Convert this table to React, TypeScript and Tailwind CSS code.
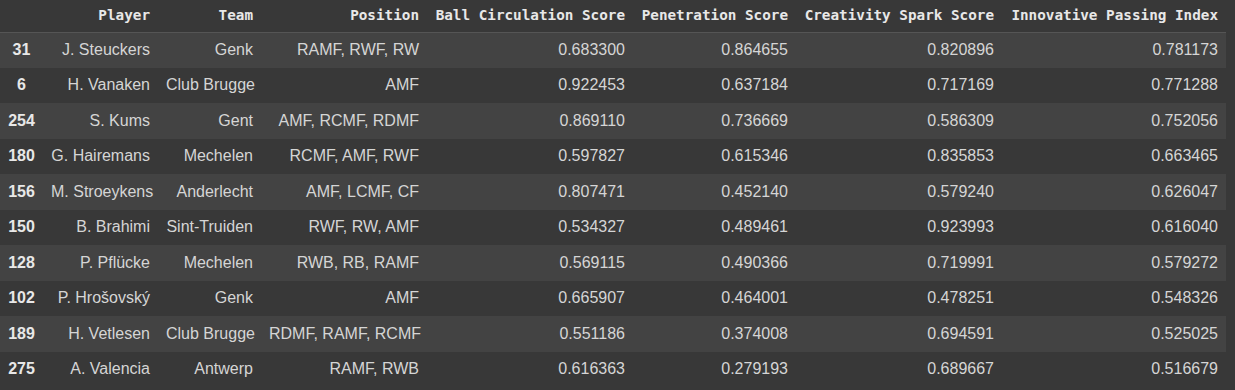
import React from 'react';

const columns = [
  { key: 'player', label: 'Player', width: 'w-[115px]' },
  { key: 'team', label: 'Team', width: 'w-[103px]' },
  { key: 'position', label: 'Position', width: 'w-[166px]' },
  { key: 'ball', label: 'Ball Circulation Score', width: 'w-[206px]' },
  { key: 'pen', label: 'Penetration Score', width: 'w-[163px]' },
  { key: 'spark', label: 'Creativity Spark Score', width: 'w-[206px]' },
  { key: 'ipi', label: 'Innovative Passing Index', width: 'w-[224px]' },
];

const rows = [
  ['31', 'J. Steuckers', 'Genk', 'RAMF, RWF, RW', '0.683300', '0.864655', '0.820896', '0.781173'],
  ['6', 'H. Vanaken', 'Club Brugge', 'AMF', '0.922453', '0.637184', '0.717169', '0.771288'],
  ['254', 'S. Kums', 'Gent', 'AMF, RCMF, RDMF', '0.869110', '0.736669', '0.586309', '0.752056'],
  ['180', 'G. Hairemans', 'Mechelen', 'RCMF, AMF, RWF', '0.597827', '0.615346', '0.835853', '0.663465'],
  ['156', 'M. Stroeykens', 'Anderlecht', 'AMF, LCMF, CF', '0.807471', '0.452140', '0.579240', '0.626047'],
  ['150', 'B. Brahimi', 'Sint-Truiden', 'RWF, RW, AMF', '0.534327', '0.489461', '0.923993', '0.616040'],
  ['128', 'P. Pflücke', 'Mechelen', 'RWB, RB, RAMF', '0.569115', '0.490366', '0.719991', '0.579272'],
  ['102', 'P. Hrošovský', 'Genk', 'AMF', '0.665907', '0.464001', '0.478251', '0.548326'],
  ['189', 'H. Vetlesen', 'Club Brugge', 'RDMF, RAMF, RCMF', '0.551186', '0.374008', '0.694591', '0.525025'],
  ['275', 'A. Valencia', 'Antwerp', 'RAMF, RWB', '0.616363', '0.279193', '0.689667', '0.516679'],
];

export default function App() {
  return (
    <div className="w-[1235px] h-[390px] bg-[#383838] overflow-hidden">
      {/* dataframe output */}
      <table className="table-fixed w-[1226px] border-collapse text-[16px] text-[#d5d5d5] font-['Liberation_Sans',Arial,sans-serif]">
        <thead>
          <tr className="h-[32px] border-b border-[#555555]">
            <th className="w-[43px]"></th>
            {columns.map((c) => (
              <th
                key={c.key}
                className={`${c.width} px-2 text-right font-bold text-[14.3px] text-[#e8e8e8] font-['DejaVu_Sans_Mono',monospace] whitespace-nowrap`}
              >
                {c.label}
              </th>
            ))}
          </tr>
        </thead>
        <tbody>
          {rows.map((r, i) => (
            <tr key={r[0]} className={i % 2 === 0 ? 'h-[35.5px] bg-[#434343]' : 'h-[35.5px] bg-[#383838]'}>
              <th className="text-center font-bold text-[#e8e8e8]">{r[0]}</th>
              {r.slice(1).map((v, j) => (
                <td key={j} className="px-2 text-right whitespace-nowrap">
                  {v}
                </td>
              ))}
            </tr>
          ))}
        </tbody>
      </table>
    </div>
  );
}
